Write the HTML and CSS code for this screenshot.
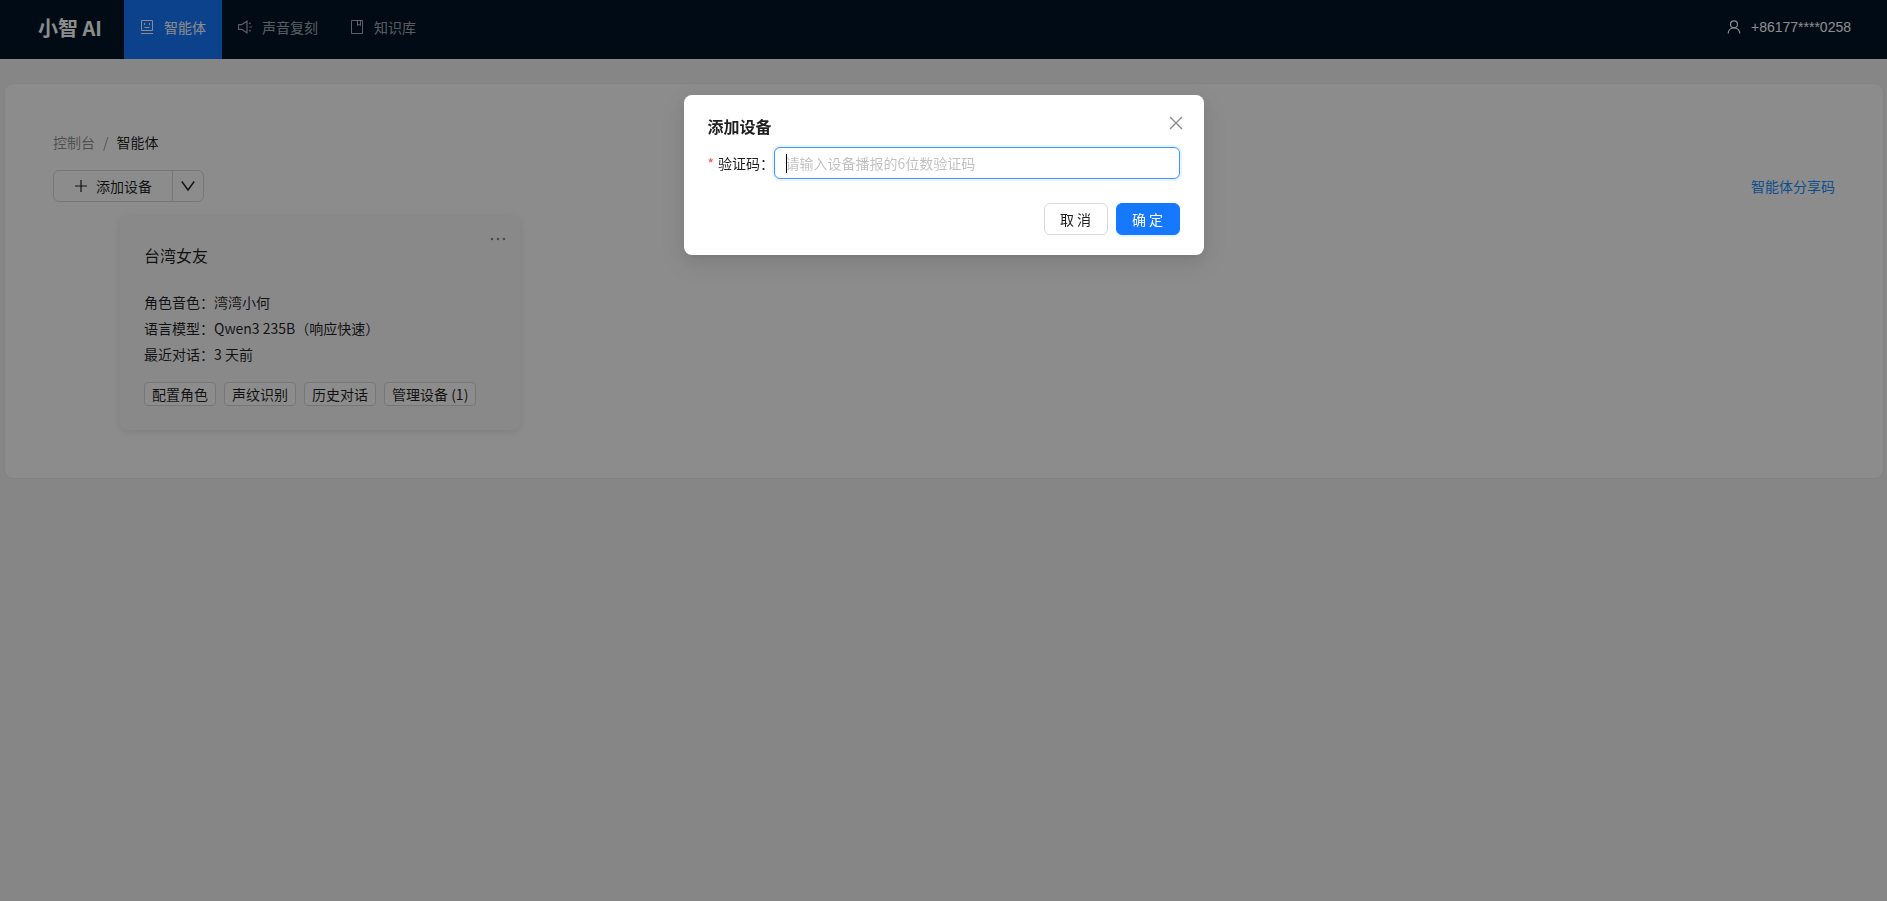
FILE: index.html
```
<!DOCTYPE html>
<html lang="zh-CN">
<head>
  <meta charset="UTF-8" />
  <meta name="viewport" content="width=device-width, initial-scale=1.0" />
  <title>小智 AI</title>
  <link rel="stylesheet" href="styles.css">
</head>
<body>
  <header class="header">
    <div class="logo">小智 AI</div>
    <nav class="menu">
      <a href="#" class="menu-item active">
        <svg class="icon" viewBox="0 0 14 14" fill="none" stroke="currentColor">
          <path d="M1.500 .5h11v10h-11zM1 13.500h12" />
          <path d="M4.500 3v2M9.500 3v2M4.500 7.500h5" />
        </svg>
        <span>智能体</span>
      </a>
      <a href="#" class="menu-item">
        <svg class="icon" viewBox="0 0 14 14" fill="none" stroke="currentColor" stroke-width="1.200">
          <path d="M.5 4.700h3.200L9 1.200v11.600L3.700 9.300H.5z" />
          <path d="M11.500 7H14M11 3.800l1.800-1M11 10.200l1.800 1" />
        </svg>
        <span>声音复刻</span>
      </a>
      <a href="#" class="menu-item">
        <svg class="icon" viewBox="0 0 14 14" fill="none" stroke="currentColor">
          <path d="M1.500 .5h11v13h-11z" />
          <path d="M7.500 .5v5l1.500-1.200 1.500 1.200v-5" />
        </svg>
        <span>知识库</span>
      </a>
    </nav>
    <a href="#" class="user">
      <svg class="icon" viewBox="0 0 14 14" fill="none" stroke="currentColor" stroke-width="1.200">
        <circle cx="7" cy="4.300" r="3.500" />
        <path d="M1.200 13.500c0-3.400 2.600-5.700 5.800-5.700s5.800 2.300 5.800 5.700" />
      </svg>
      <span>+86177****0258</span>
    </a>
  </header>

  <main class="panel">
    <nav class="breadcrumb">
      <a href="#">控制台</a>
      <span class="separator">/</span>
      <span class="current">智能体</span>
    </nav>

    <div class="toolbar">
      <div class="btn-group">
        <button type="button" class="btn btn-add">
          <svg class="icon" viewBox="0 0 14 14" fill="none" stroke="currentColor" stroke-width="1.200">
            <path d="M7 1v12M1 7h12" />
          </svg>
          添加设备
        </button>
        <button type="button" class="btn btn-more" aria-label="更多">
          <svg class="icon" viewBox="0 0 14 14" fill="none" stroke="currentColor" stroke-width="1.400">
            <path d="M.8 2.500L7 11l6.200-8.500" />
          </svg>
        </button>
      </div>
      <a href="#" class="share-link">智能体分享码</a>
    </div>

    <section class="card">
      <div class="card-head">
        <h2>台湾女友</h2>
        <button type="button" class="card-more" aria-label="更多操作">
          <svg viewBox="0 0 16 16" fill="currentColor">
            <circle cx="2" cy="8" r="1.300" />
            <circle cx="8" cy="8" r="1.300" />
            <circle cx="14" cy="8" r="1.300" />
          </svg>
        </button>
      </div>
      <p>角色音色：湾湾小何</p>
      <p>语言模型：Qwen3 235B（响应快速）</p>
      <p>最近对话：3 天前</p>
      <div class="card-actions">
        <button type="button" class="btn-small">配置角色</button>
        <button type="button" class="btn-small">声纹识别</button>
        <button type="button" class="btn-small">历史对话</button>
        <button type="button" class="btn-small">管理设备 (1)</button>
      </div>
    </section>
  </main>

  <!-- 添加设备弹窗 -->
  <div class="mask">
    <form class="modal" role="dialog" aria-labelledby="modalTitle">
      <div class="modal-head">
        <h1 id="modalTitle">添加设备</h1>
        <button type="button" class="modal-close" aria-label="关闭">
          <svg viewBox="0 0 16 16" fill="none" stroke="currentColor" stroke-width="1.400">
            <path d="M2 2l12 12M14 2L2 14" />
          </svg>
        </button>
      </div>
      <div class="form-row">
        <label for="code"><span class="required">*</span>验证码：</label>
        <input type="text" id="code" placeholder="请输入设备播报的6位数验证码" autocomplete="off" autofocus>
      </div>
      <div class="modal-footer">
        <button type="button" class="btn">取 消</button>
        <button type="submit" class="btn btn-primary">确 定</button>
      </div>
    </form>
  </div>
</body>
</html>
```
FILE: styles.css
```
* {
  box-sizing: border-box;
}
body {
  margin: 0;
  min-height: 100vh;
  background: #f5f5f5;
  color: rgba(0, 0, 0, 0.88);
  font-family: "Noto Sans CJK SC", sans-serif;
  font-size: 14px;
  line-height: 22px;
}
a {
  color: inherit;
  text-decoration: none;
}
button, input {
  font: inherit;
  color: inherit;
}
button {
  cursor: pointer;
}
h1, h2, p {
  margin: 0;
}
.icon {
  width: 14px;
  height: 14px;
  flex-shrink: 0;
}

/* header */
.header {
  display: flex;
  height: 59px;
  padding: 0 36px;
  background: #001529;
  color: #fff;
}
.logo {
  padding: 0 22px 4px 2px;
  display: flex;
  align-items: center;
  font-size: 20px;
  font-weight: bold;
}
.menu {
  display: flex;
  flex: 1;
}
.menu-item, .user {
  display: flex;
  align-items: center;
  gap: 10px;
  padding: 0 16px 5px;
}
.menu-item {
  color: rgba(255, 255, 255, 0.65);
}
.menu-item.active {
  background: #1677ff;
  color: #fff;
}
.user {
  padding-right: 0;
  font-family: "Liberation Sans", sans-serif;
}

/* content */
.panel {
  margin: 25px 4px 0 5px;
  padding: 47px 48px 48px;
  background: #fff;
  border-radius: 8px;
  box-shadow: 0 0 2px rgba(0, 0, 0, 0.1);
}
.breadcrumb {
  display: flex;
  gap: 8px;
  color: rgba(0, 0, 0, 0.45);
}
.breadcrumb .current {
  color: rgba(0, 0, 0, 0.88);
}
.toolbar {
  display: flex;
  justify-content: space-between;
  align-items: center;
  margin: 17px 0 14px;
}
.btn-group {
  display: flex;
}
.btn {
  height: 32px;
  min-width: 64px;
  padding: 0 15px 1px;
  background: #fff;
  border: 1px solid #d9d9d9;
  border-radius: 6px;
}
.btn-add, .btn-more {
  display: flex;
  align-items: center;
  justify-content: center;
}
.btn-add {
  gap: 8px;
  padding: 0 20px;
  border-radius: 6px 0 0 6px;
}
.btn-more {
  width: 32px;
  min-width: 32px;
  padding: 0;
  margin-left: -1px;
  border-radius: 0 6px 6px 0;
}
.share-link {
  color: #1890ff;
}

.card {
  width: 400px;
  margin-left: 67px;
  padding: 23px 24px 24px;
  background: #fafafa;
  border-radius: 8px;
  box-shadow: 0 2px 8px rgba(0, 0, 0, 0.1);
}
.card-head {
  display: flex;
  justify-content: space-between;
  align-items: center;
  margin-bottom: 20px;
}
.card h2 {
  font-size: 16px;
  font-weight: normal;
  line-height: 32px;
}
.card-more {
  width: 16px;
  height: 32px;
  margin: -28px -10px 0 0;
  padding: 0;
  background: none;
  border: none;
  color: rgba(0, 0, 0, 0.45);
}
.card p {
  margin-bottom: 4px;
}
.card-actions {
  display: flex;
  gap: 8px;
  margin-top: 17px;
}
.btn-small {
  height: 24px;
  padding: 0 7px;
  background: #fff;
  border: 1px solid #d9d9d9;
  border-radius: 4px;
  line-height: 20px;
}

/* modal */
.mask {
  position: fixed;
  inset: 0;
  padding-top: 95px;
  background: rgba(0, 0, 0, 0.45);
}
.modal {
  width: 520px;
  margin: 0 auto;
  padding: 20px 24px;
  background: #fff;
  border-radius: 8px;
  box-shadow: 0 6px 16px rgba(0, 0, 0, 0.08), 0 3px 6px -4px rgba(0, 0, 0, 0.12), 0 9px 28px 8px rgba(0, 0, 0, 0.05);
}
.modal-head {
  display: flex;
  justify-content: space-between;
  height: 24px;
  margin-bottom: 8px;
}
.modal h1 {
  font-size: 16px;
  line-height: 22px;
}
.modal-close {
  width: 16px;
  height: 16px;
  margin-right: -4px;
  padding: 0;
  background: none;
  border: none;
  color: rgba(0, 0, 0, 0.45);
}
.modal-close svg {
  display: block;
}
.form-row {
  display: flex;
  align-items: center;
}
.form-row label {
  width: 66px;
  white-space: nowrap;
}
.required {
  margin-right: 4px;
  color: #ff4d4f;
}
.form-row input {
  flex: 1;
  height: 32px;
  padding: 0 11px;
  background: #fff;
  border: 1px solid #d9d9d9;
  border-radius: 6px;
}
.form-row input::placeholder {
  color: rgba(0, 0, 0, 0.25);
}
.form-row input:focus {
  border-color: #4096ff;
  box-shadow: 0 0 0 2px rgba(5, 145, 255, 0.1);
  outline: none;
}
/* steady caret while the field is empty */
.form-row input:placeholder-shown:focus {
  background: linear-gradient(#000, #000) 11px center / 1px 19px no-repeat #fff;
  caret-color: transparent;
}
.modal-footer {
  display: flex;
  justify-content: flex-end;
  gap: 8px;
  margin-top: 24px;
}
.btn-primary {
  background: #1677ff;
  border-color: #1677ff;
  color: #fff;
  box-shadow: 0 2px 0 rgba(5, 145, 255, 0.1);
}
```
